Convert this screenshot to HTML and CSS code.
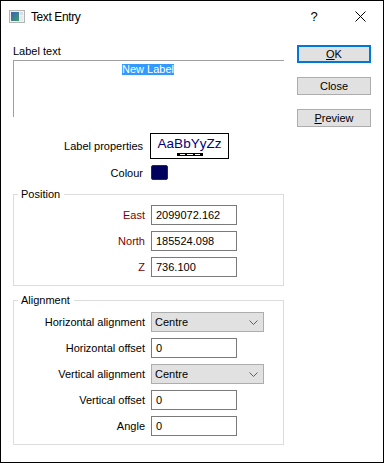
FILE: index.html
```html
<!DOCTYPE html>
<html lang="en">
<head>
    <meta charset="UTF-8">
    <meta name="viewport" content="width=device-width, initial-scale=1.0">
    <title>Text Entry</title>
    <link rel="stylesheet" href="styles.css">
</head>
<body>

<div class="dialog">
    <div class="titlebar">
        <svg class="app-icon" width="16" height="13" viewBox="0 0 16 13">
            <defs>
                <linearGradient id="ig" x1="0" y1="0" x2="1" y2="1">
                    <stop offset="0" stop-color="#3a62b8"/>
                    <stop offset="1" stop-color="#3f9d6a"/>
                </linearGradient>
            </defs>
            <rect x="0.5" y="0.5" width="15" height="12" fill="#f2f2f2" stroke="#b4b4b4"/>
            <rect x="2" y="2" width="8" height="9" fill="url(#ig)"/>
            <rect x="11" y="2" width="3" height="3" fill="#d7dde3"/>
            <rect x="11" y="6" width="3" height="5" fill="#e6e9ec"/>
        </svg>
        <span class="title">Text Entry</span>
        <span class="caption-btn help">?</span>
        <span class="caption-btn">
            <svg width="11" height="11" viewBox="0 0 11 11">
                <path d="M0.5 0.5 L10.5 10.5 M10.5 0.5 L0.5 10.5" stroke="#000" stroke-width="1"/>
            </svg>
        </span>
    </div>

    <div class="content">
        <div class="main">
            <div class="caption">Label text</div>
            <div class="textbox"><span class="sel">New Label</span></div>

            <div class="prop-row props">
                <span class="prop-label">Label properties</span>
                <div class="font-preview">
                    <span class="sample">AaBbYyZz</span>
                    <svg width="26" height="3" viewBox="0 0 26 3">
                        <rect width="26" height="3" fill="#000"/>
                        <rect x="3" y="1" width="5" height="1" fill="#fff"/>
                        <rect x="10" y="1" width="6" height="1" fill="#fff"/>
                        <rect x="18" y="1" width="5" height="1" fill="#fff"/>
                    </svg>
                </div>
            </div>

            <div class="prop-row colour">
                <span class="prop-label">Colour</span>
                <span class="swatch"></span>
            </div>

            <fieldset class="group position">
                <legend>Position</legend>
                <div class="field">
                    <label class="req">East</label>
                    <input class="edit" type="text" value="2099072.162">
                </div>
                <div class="field">
                    <label class="req">North</label>
                    <input class="edit" type="text" value="185524.098">
                </div>
                <div class="field">
                    <label class="req">Z</label>
                    <input class="edit" type="text" value="736.100">
                </div>
            </fieldset>

            <fieldset class="group alignment">
                <legend>Alignment</legend>
                <div class="field">
                    <label>Horizontal alignment</label>
                    <div class="combo">
                        <span>Centre</span>
                        <svg width="9" height="5" viewBox="0 0 9 5"><path d="M0.5 0.5 L4.5 4.5 L8.5 0.5" fill="none" stroke="#606060"/></svg>
                    </div>
                </div>
                <div class="field">
                    <label>Horizontal offset</label>
                    <input class="edit" type="text" value="0">
                </div>
                <div class="field">
                    <label>Vertical alignment</label>
                    <div class="combo">
                        <span>Centre</span>
                        <svg width="9" height="5" viewBox="0 0 9 5"><path d="M0.5 0.5 L4.5 4.5 L8.5 0.5" fill="none" stroke="#606060"/></svg>
                    </div>
                </div>
                <div class="field">
                    <label>Vertical offset</label>
                    <input class="edit" type="text" value="0">
                </div>
                <div class="field">
                    <label>Angle</label>
                    <input class="edit" type="text" value="0">
                </div>
            </fieldset>
        </div>

        <div class="buttons">
            <button class="default"><u>O</u>K</button>
            <button>Close</button>
            <button><u>P</u>review</button>
        </div>
    </div>
</div>

</body>
</html>
```

FILE: styles.css
```css
body {
    margin: 0;
    font-family: "Liberation Sans", Arial, sans-serif;
    font-size: 11px;
    color: #000;
    background: #fff;
}

.dialog {
    width: 384px;
    height: 463px;
    box-sizing: border-box;
    border: 1px solid #000;
    background: #fff;
}

/* title bar */
.titlebar {
    display: flex;
    align-items: center;
    height: 31px;
}
.app-icon {
    margin-left: 8px;
    display: block;
}
.title {
    margin-left: 6px;
    font-size: 12px;
    letter-spacing: -0.4px;
}
.caption-btn {
    width: 46px;
    height: 31px;
    display: flex;
    align-items: center;
    justify-content: center;
}
.help {
    margin-left: auto;
    font-size: 13px;
}

/* body */
.content {
    display: flex;
    padding: 12px 0 0 12px;
}
.main {
    width: 271px;
}
.caption {
    line-height: 14px;
    margin-bottom: 2px;
}
.textbox {
    height: 57px;
    box-sizing: border-box;
    border-top: 1px solid #a0a0a0;
    border-left: 1px solid #a0a0a0;
    text-align: center;
    padding: 2px 2px 0 0;
}
.sel {
    display: inline-block;
    line-height: 11px;
    background: #3399ff;
    color: #fff;
}

.prop-row {
    display: flex;
    align-items: center;
}
.prop-label {
    width: 130px;
    text-align: right;
    margin-right: 7px;
}
.props {
    margin-top: 16px;
}
.font-preview {
    width: 79px;
    height: 26px;
    box-sizing: border-box;
    border: 1px solid #000;
    display: flex;
    flex-direction: column;
    align-items: center;
    padding-top: 2px;
}
.sample {
    color: #000080;
    font-size: 13.5px;
    line-height: 15px;
}
.font-preview svg {
    display: block;
    margin-top: 2px;
}
.colour {
    margin-top: 6px;
    height: 15px;
}
.swatch {
    width: 17px;
    height: 15px;
    box-sizing: border-box;
    margin-left: 1px;
    background: #00005e;
    border: 1px solid #2a2a40;
    border-radius: 2px;
}

/* group boxes */
.group {
    margin: 7px 0 0 0;
    border: 1px solid #dcdcdc;
    padding: 4px 0 8px 0;
    min-width: 0;
}
.group legend {
    margin-left: 4px;
    padding: 0 4px 0 3px;
    line-height: 14px;
}
.alignment {
    padding-top: 5px;
}
.field {
    display: flex;
    align-items: center;
    height: 20px;
    margin-bottom: 6px;
}
.field:last-child {
    margin-bottom: 0;
}
.field label {
    width: 131px;
    text-align: right;
    margin-right: 6px;
}
.field label.req {
    color: #800000;
}
.edit {
    width: 86px;
    height: 20px;
    box-sizing: border-box;
    border: 1px solid #7a7a7a;
    padding: 0 4px;
    margin: 0;
    font: inherit;
    color: #000;
    background: #fff;
    outline: none;
}
.combo {
    width: 113px;
    height: 20px;
    box-sizing: border-box;
    border: 1px solid #adadad;
    background: #e1e1e1;
    display: flex;
    align-items: center;
    justify-content: space-between;
    padding: 0 5px 0 3px;
}
.combo svg {
    display: block;
}

/* buttons */
.buttons {
    margin-left: 13px;
    padding-top: 1px;
    display: flex;
    flex-direction: column;
    gap: 14px;
}
.buttons button {
    width: 74px;
    height: 18px;
    box-sizing: border-box;
    border: 1px solid #adadad;
    background: #e1e1e1;
    font: inherit;
    color: #000;
    padding: 0;
    margin: 0;
}
.buttons button.default {
    border: 2px solid #0078d7;
}
```
